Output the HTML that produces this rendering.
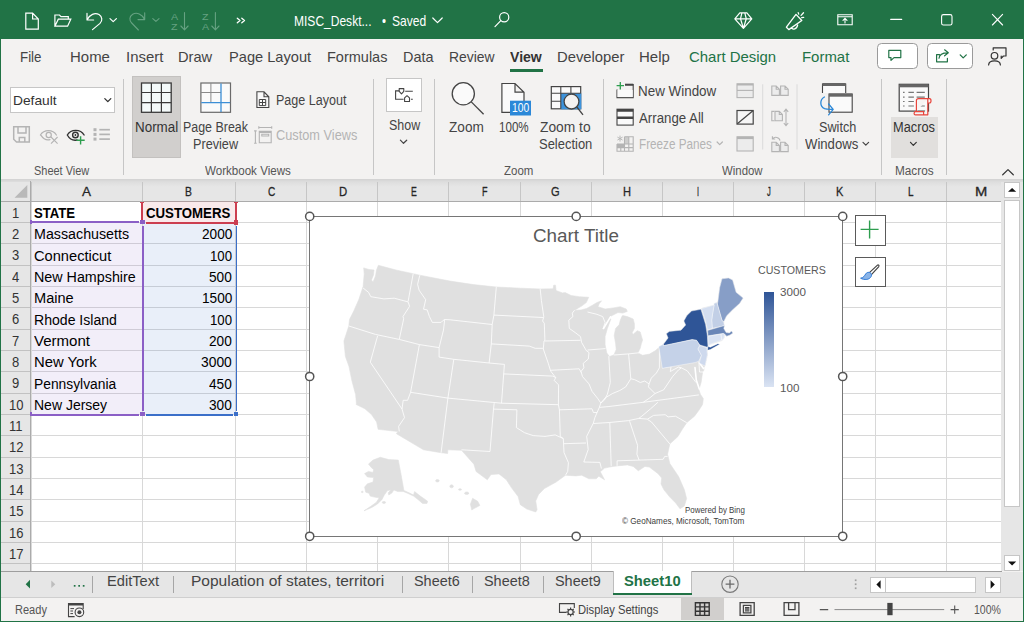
<!DOCTYPE html>
<html><head><meta charset="utf-8"><title>Excel</title><style>
html,body{margin:0;padding:0;}
body{width:1024px;height:622px;position:relative;overflow:hidden;background:#f3f2f1;font-family:"Liberation Sans",sans-serif;}
.t{position:absolute;white-space:nowrap;transform-origin:0 0;display:block;}
.b{position:absolute;box-sizing:border-box;}
svg{position:absolute;overflow:visible;}
</style></head><body>
<div class="b" style="left:0px;top:0px;width:1024px;height:39px;background:#217346;"></div>
<div class="b" style="left:0px;top:39px;width:1px;height:583px;background:#217346;"></div>
<div class="b" style="left:1023px;top:39px;width:1px;height:583px;background:#217346;"></div>
<div class="b" style="left:0px;top:620px;width:1024px;height:2px;background:#217346;"></div>
<span class="t" style="left:293.50px;top:13.30px;font-size:15px;line-height:15px;color:#fff;transform:scaleX(0.8016);">MISC_Deskt...</span>
<span class="t" style="left:382.00px;top:13.30px;font-size:15px;line-height:15px;color:#fff;transform:scaleX(0.7619);">•</span>
<span class="t" style="left:392.00px;top:13.30px;font-size:15px;line-height:15px;color:#fff;transform:scaleX(0.8035);">Saved</span>
<span class="t" style="left:20.00px;top:49.30px;font-size:15px;line-height:15px;color:#444;transform:scaleX(0.8889);">File</span>
<span class="t" style="left:69.70px;top:49.30px;font-size:15px;line-height:15px;color:#444;transform:scaleX(0.9975);">Home</span>
<span class="t" style="left:125.50px;top:49.30px;font-size:15px;line-height:15px;color:#444;transform:scaleX(0.9947);">Insert</span>
<span class="t" style="left:178.40px;top:49.30px;font-size:15px;line-height:15px;color:#444;transform:scaleX(0.9754);">Draw</span>
<span class="t" style="left:228.50px;top:49.30px;font-size:15px;line-height:15px;color:#444;transform:scaleX(0.9745);">Page Layout</span>
<span class="t" style="left:326.60px;top:49.30px;font-size:15px;line-height:15px;color:#444;transform:scaleX(0.9664);">Formulas</span>
<span class="t" style="left:403.00px;top:49.30px;font-size:15px;line-height:15px;color:#444;transform:scaleX(0.9606);">Data</span>
<span class="t" style="left:448.80px;top:49.30px;font-size:15px;line-height:15px;color:#444;transform:scaleX(0.9259);">Review</span>
<span class="t" style="left:556.50px;top:49.30px;font-size:15px;line-height:15px;color:#444;transform:scaleX(0.9872);">Developer</span>
<span class="t" style="left:638.50px;top:49.30px;font-size:15px;line-height:15px;color:#444;transform:scaleX(0.9976);">Help</span>
<span class="t" style="left:510.00px;top:49.30px;font-size:15px;line-height:15px;color:#333;font-weight:bold;transform:scaleX(0.9382);">View</span>
<div class="b" style="left:510px;top:69px;width:33px;height:3px;background:#217346;"></div>
<span class="t" style="left:689.40px;top:49.30px;font-size:15px;line-height:15px;color:#217346;transform:scaleX(0.9959);">Chart Design</span>
<span class="t" style="left:801.50px;top:49.30px;font-size:15px;line-height:15px;color:#217346;transform:scaleX(0.9958);">Format</span>
<div class="b" style="left:876.5px;top:43px;width:41px;height:26px;background:#fff;border:1px solid #9a9a9a;border-radius:4.5px;"></div>
<div class="b" style="left:927px;top:43px;width:45.5px;height:26px;background:#fff;border:1px solid #9a9a9a;border-radius:4.5px;"></div>
<svg width="1024" height="622" viewBox="0 0 1024 622" style="left:0;top:0;" fill="none" stroke-linecap="round" stroke-linejoin="round"><path d="M25.8 13.1 H32.6 L38.3 19 V29.1 H25.8 Z M32.6 13.1 V19 H38.3" stroke="#fff" stroke-width="1.2" stroke-linejoin="miter"/><path d="M54.9 26.2 V15 H59.5 L61 16.6 H68.3 V19.2 M54.9 26.2 L58.3 19.2 H70.8 L67.6 26.2 Z" stroke="#fff" stroke-width="1.2" stroke-linejoin="miter"/><path d="M87 13.4 V20 H93.6 M87.3 19.6 C89.5 14.5 95 12.3 99 14.6 C102.5 16.8 102.6 20.8 100 23.4 L92.5 29.6" stroke="#fff" stroke-width="1.2"/><path d="M110 18.6 L113.2 21.6 L116.4 18.6" stroke="#fff" stroke-width="1.2"/><path d="M144.7 12.8 V19.6 H138 M144.4 19.2 C142.2 14.1 136.7 11.9 132.7 14.2 C129.2 16.4 129.1 20.4 131.7 23 L138.4 30" stroke="#66a282" stroke-width="1.1"/><path d="M152.8 18.7 L155.9 21.4 L159 18.7" stroke="#66a282" stroke-width="1.1"/><path d="M184.5 12.6 V29.6 M180.9 26 L184.5 29.8 L188.1 26" stroke="#66a282" stroke-width="1.1"/><path d="M215.4 12.6 V29.6 M211.8 26 L215.4 29.8 L219.0 26" stroke="#66a282" stroke-width="1.1"/><path d="M237.3 18.2 L240 20.5 L237.3 22.8 M241.8 18.2 L244.5 20.5 L241.8 22.8" stroke="#fff" stroke-width="1.3"/><path d="M432.8 18 L437.5 22.6 L442.2 18" stroke="#fff" stroke-width="1.2"/><circle cx="504.2" cy="17.2" r="4.6" stroke="#fff" stroke-width="1.2"/><path d="M500.8 20.6 L495 26.6" stroke="#fff" stroke-width="1.2"/><path d="M739.8 12.8 H746.9 L751.8 18.8 L743.4 28.3 L734.8 18.8 Z M734.8 18.8 H751.8 M741.9 12.8 L740.5 18.8 L743.4 28.3 L746.3 18.8 L744.8 12.8" stroke="#fff" stroke-width="1.2"/><path d="M796 14.4 L801.8 20.5 L788.8 29.6 L786.4 27.2 Z M791.7 27.6 C792.4 30 796.9 29.6 797.6 25.2 M798.2 12.6 L798.7 14.1 M801.1 15.4 L803.5 12.7 M801.7 17.7 L803.7 17.3" stroke="#fff" stroke-width="1.3"/><path d="M837.8 14.8 H852.2 V24.8 H837.8 Z M837.8 16.8 H852.2 M845 23 V18.6 M843 20.4 L845 18.4 L847 20.4" stroke="#fff" stroke-width="1.1" stroke-linejoin="miter"/><path d="M890.7 19.4 H901.7" stroke="#fff" stroke-width="1.1"/><rect x="941.6" y="14.6" width="10.4" height="10.4" rx="1.8" stroke="#fff" stroke-width="1.1"/><path d="M992.4 14.4 L1002.6 25 M1002.6 14.4 L992.4 25" stroke="#fff" stroke-width="1.1"/></svg>
<span class="t" style="left:170.90px;top:11.59px;font-size:9.7px;line-height:9.7px;color:#66a282;transform:scaleX(1.1077);">A</span>
<span class="t" style="left:171.30px;top:21.69px;font-size:9.7px;line-height:9.7px;color:#66a282;transform:scaleX(1.0947);">Z</span>
<span class="t" style="left:202.30px;top:11.59px;font-size:9.7px;line-height:9.7px;color:#66a282;transform:scaleX(1.0947);">Z</span>
<span class="t" style="left:201.90px;top:21.69px;font-size:9.7px;line-height:9.7px;color:#66a282;transform:scaleX(1.1077);">A</span>
<div class="b" style="left:122.5px;top:79px;width:1px;height:96px;background:#c6c6c6;"></div>
<div class="b" style="left:372.5px;top:79px;width:1px;height:96px;background:#c6c6c6;"></div>
<div class="b" style="left:434.0px;top:79px;width:1px;height:96px;background:#c6c6c6;"></div>
<div class="b" style="left:603.0px;top:79px;width:1px;height:96px;background:#c6c6c6;"></div>
<div class="b" style="left:880.5px;top:79px;width:1px;height:96px;background:#c6c6c6;"></div>
<div class="b" style="left:945.5px;top:79px;width:1px;height:96px;background:#c6c6c6;"></div>
<div class="b" style="left:10px;top:87px;width:105px;height:25.5px;background:#fff;border:1px solid #c6c6c6;"></div>
<span class="t" style="left:12.70px;top:93.57px;font-size:13.5px;line-height:13.5px;color:#333;transform:scaleX(1.0199);">Default</span>
<div class="b" style="left:132.2px;top:76px;width:48.6px;height:81.6px;background:#d1cfcd;border:1px solid #c3c1bf;"></div>
<span class="t" style="left:134.50px;top:120.05px;font-size:14px;line-height:14px;color:#333;transform:scaleX(0.9573);">Normal</span>
<span class="t" style="left:183.20px;top:120.05px;font-size:14px;line-height:14px;color:#444;transform:scaleX(0.8874);">Page Break</span>
<span class="t" style="left:192.90px;top:137.25px;font-size:14px;line-height:14px;color:#444;transform:scaleX(0.9043);">Preview</span>
<span class="t" style="left:275.50px;top:93.15px;font-size:14px;line-height:14px;color:#444;transform:scaleX(0.8967);">Page Layout</span>
<span class="t" style="left:275.50px;top:127.85px;font-size:14px;line-height:14px;color:#b4b4b4;transform:scaleX(0.9116);">Custom Views</span>
<div class="b" style="left:386px;top:78px;width:36px;height:34px;background:#fff;border:1px solid #c6c6c6;"></div>
<span class="t" style="left:388.50px;top:118.45px;font-size:14px;line-height:14px;color:#444;transform:scaleX(0.8883);">Show</span>
<span class="t" style="left:449.40px;top:120.05px;font-size:14px;line-height:14px;color:#444;transform:scaleX(0.9717);">Zoom</span>
<span class="t" style="left:499.00px;top:120.05px;font-size:14px;line-height:14px;color:#444;transform:scaleX(0.8293);">100%</span>
<span class="t" style="left:540.40px;top:120.05px;font-size:14px;line-height:14px;color:#444;transform:scaleX(0.9849);">Zoom to</span>
<span class="t" style="left:538.90px;top:137.25px;font-size:14px;line-height:14px;color:#444;transform:scaleX(0.9260);">Selection</span>
<span class="t" style="left:638.20px;top:83.95px;font-size:14px;line-height:14px;color:#444;transform:scaleX(0.9578);">New Window</span>
<span class="t" style="left:638.60px;top:110.65px;font-size:14px;line-height:14px;color:#444;transform:scaleX(0.9460);">Arrange All</span>
<span class="t" style="left:638.60px;top:137.25px;font-size:14px;line-height:14px;color:#b4b4b4;transform:scaleX(0.8361);">Freeze Panes</span>
<span class="t" style="left:818.50px;top:120.05px;font-size:14px;line-height:14px;color:#444;transform:scaleX(0.9042);">Switch</span>
<span class="t" style="left:804.50px;top:137.25px;font-size:14px;line-height:14px;color:#444;transform:scaleX(0.9382);">Windows</span>
<div class="b" style="left:891px;top:117.3px;width:46.9px;height:40.6px;background:#e1dfdd;"></div>
<span class="t" style="left:893.00px;top:120.05px;font-size:14px;line-height:14px;color:#333;transform:scaleX(0.9155);">Macros</span>
<span class="t" style="left:34.30px;top:165.42px;font-size:12.5px;line-height:12.5px;color:#555;transform:scaleX(0.8769);">Sheet View</span>
<span class="t" style="left:205.00px;top:165.42px;font-size:12.5px;line-height:12.5px;color:#555;transform:scaleX(0.9263);">Workbook Views</span>
<span class="t" style="left:504.00px;top:165.42px;font-size:12.5px;line-height:12.5px;color:#555;transform:scaleX(0.9174);">Zoom</span>
<span class="t" style="left:722.00px;top:165.42px;font-size:12.5px;line-height:12.5px;color:#555;transform:scaleX(0.9124);">Window</span>
<span class="t" style="left:894.60px;top:165.42px;font-size:12.5px;line-height:12.5px;color:#555;transform:scaleX(0.9415);">Macros</span>
<svg width="1024" height="622" viewBox="0 0 1024 622" style="left:0;top:0;" fill="none" stroke-linecap="butt" stroke-linejoin="miter"><path d="M888.8 50.3 H900.8 V57.6 H894 L891 60.4 V57.6 H888.8 Z" stroke="#217346" stroke-width="1.2" stroke-linejoin="round"/><path d="M939.5 54.6 H936.6 V61.8 H947.4 V58.4 M939 58.2 C939.4 54.6 942.5 52.8 947.6 52.8 M944.6 49.8 L948.3 52.8 L944.6 55.8" stroke="#217346" stroke-width="1.2" stroke-linejoin="round" stroke-linecap="round"/><path d="M960.2 54.9 L963.2 57.9 L966.3 54.9" stroke="#217346" stroke-width="1.3" stroke-linecap="round" stroke-linejoin="round"/><circle cx="994.5" cy="55.8" r="3.3" stroke="#333" stroke-width="1.2"/><path d="M988.6 65 C988.9 59.6 1000.1 59.6 1000.4 65 M993.2 50 V47.8 H1006 V56 H1003.4 L1001.2 58.4 V56" stroke="#333" stroke-width="1.2" stroke-linejoin="round" stroke-linecap="round"/><path d="M104.8 98.6 L107.8 101.6 L110.8 98.6" stroke="#333" stroke-width="1.3" stroke-linecap="round" stroke-linejoin="round"/><path d="M13.7 126.7 H29.3 V142.1 H16.5 L13.7 139.3 Z M18 126.7 V133 H26 V126.7 M19.3 142.1 V137.4 H24.8 V142.1" stroke="#b4b4b4" stroke-width="1.5"/><path d="M40.4 135 C44 129.2 52.8 129.2 56.4 135 M41 135.4 C43.5 139.2 47.5 140.2 50 139.6" stroke="#b4b4b4" stroke-width="1.2" stroke-linecap="round"/><circle cx="48.7" cy="135" r="2.6" stroke="#b4b4b4" stroke-width="1.2"/><path d="M51 137 L57.6 143.6 M57.6 137 L51 143.6" stroke="#b4b4b4" stroke-width="1.1"/><path d="M67.3 135 C71 128.8 80.4 128.8 84.1 135 M67.3 135 C69.8 139.4 74 140.6 77 140" stroke="#333" stroke-width="1.4" stroke-linecap="round"/><circle cx="75.4" cy="135" r="2.8" stroke="#333" stroke-width="1.4"/><circle cx="75.4" cy="135" r="0.9" fill="#333"/><path d="M80.6 136.2 V144.4 M76.5 140.3 H84.7" stroke="#2e9e4f" stroke-width="1.4"/><rect x="93.5" y="128.2" width="3" height="3" fill="#b4b4b4"/><path d="M99.3 129.7 H109.9" stroke="#b4b4b4" stroke-width="1.7"/><rect x="93.5" y="132.9" width="3" height="3" fill="#b4b4b4"/><path d="M99.3 134.4 H109.9" stroke="#b4b4b4" stroke-width="1.7"/><rect x="93.5" y="137.6" width="3" height="3" fill="#b4b4b4"/><path d="M99.3 139.1 H109.9" stroke="#b4b4b4" stroke-width="1.7"/><rect x="141.5" y="83" width="29.7" height="29.3" fill="#f4fafa" stroke="#3a3a3a" stroke-width="1.3"/><path d="M151.4 83 V112.3 M161.4 83 V112.3 M141.5 92.5 H171.2 M141.5 102.6 H171.2" stroke="#3a3a3a" stroke-width="1.2"/><rect x="200.9" y="83" width="29.6" height="29.3" fill="#fafafa" stroke="#6a6a6a" stroke-width="1.2"/><path d="M210.9 83 V102.6 M200.9 92.5 H221" stroke="#8a8a8a" stroke-width="1"/><path d="M221 83.4 V111.9 M201.3 102.7 H230.1" stroke="#3c8fd6" stroke-width="1.3"/><path d="M256.9 91.8 H264 L268.8 96.8 V107.5 H256.9 Z M264 91.8 V96.8 H268.8" stroke="#444" stroke-width="1.1" fill="#fafafa"/><path d="M259.3 99.5 H265.7 V105.6 H259.3 Z M262.5 99.5 V105.6 M259.3 102.5 H265.7" stroke="#444" stroke-width="1"/><path d="M259.3 131.4 H271.2 V142.7 H259.3 Z M259.3 132.4 H271.2 M261.8 134.3 H268.7 V136 H261.8 Z M258.8 127.5 H271.7 M258.8 126.2 V128.8 M271.7 126.2 V128.8 M255.4 130.9 V143.2 M254.1 130.9 H256.7 M254.1 143.2 H256.7" stroke="#b4b4b4" stroke-width="1.1"/><path d="M399 90.9 H395.6 V99.2 H403.6 M405.2 91.2 H412.8 M410.9 99.2 H412.8" stroke="#444" stroke-width="1.1"/><path d="M399.2 88.6 H403.8 V91.4 L401.5 93.9 L399.2 91.4 Z M404.6 101.5 V97.9 L407 95.7 L409.5 97.9 V101.5 Z" stroke="#444" stroke-width="1.1" stroke-linejoin="round"/><path d="M400.4 140.2 L403.5 143.3 L406.7 140.2" stroke="#444" stroke-width="1.2" stroke-linecap="round" stroke-linejoin="round"/><circle cx="463.3" cy="93.8" r="11.1" fill="#fafafa" stroke="#444" stroke-width="1.3"/><path d="M471.3 101.9 L483.6 114.2" stroke="#444" stroke-width="1.3"/><path d="M501.9 83.5 H515 L524 92.2 V112.3 H501.9 Z M515 83.5 V92.2 H524" fill="#fafafa" stroke="#444" stroke-width="1.2"/><rect x="510" y="100.7" width="21" height="14.8" fill="#2b88d8"/><rect x="551.3" y="86.6" width="29.4" height="22.2" fill="#fafafa" stroke="#444" stroke-width="1.2"/><rect x="560.8" y="93.2" width="20.5" height="16.1" fill="#3c93dc"/><path d="M560.8 86.6 V108.8 M570.9 86.6 V93.2 M551.3 93.2 H580.7 M551.3 101.3 H560.8" stroke="#444" stroke-width="1.1"/><circle cx="571.5" cy="101.6" r="7.4" fill="#f3f2f1" stroke="#444" stroke-width="1.3"/><path d="M576.9 107 L583 114.8" stroke="#444" stroke-width="1.3"/><path d="M617 89.5 V97.6 H633.2 V84.6 H625" stroke="#444" stroke-width="1.1" fill="none"/><path d="M617.5 90 H632.7 V97.1 H617.5 Z" fill="#fafafa"/><path d="M625 84.7 H633.2" stroke="#444" stroke-width="2"/><path d="M620.3 82 V89.4 M616.6 85.7 H624" stroke="#2e9e4f" stroke-width="1.3"/><rect x="617" y="109.2" width="16.2" height="15.9" fill="#fafafa" stroke="#444" stroke-width="1.1"/><path d="M617 110.4 H633.2 M617 117.8 H633.2" stroke="#444" stroke-width="2.6"/><path d="M624.5 136.8 H633.2 V151.2 H617 V144 M624.5 136.8 V151.2 M617 144 H633.2 M628.8 136.8 V151.2 M617 147.6 H633.2 M620.8 144 V151.2" stroke="#b4b4b4" stroke-width="1.1"/><rect x="617" y="144" width="7.5" height="3.6" fill="#b4b4b4"/><rect x="624.5" y="136.8" width="4.3" height="7.2" fill="#b4b4b4" opacity="0.6"/><path d="M620 135.6 V141.6 M617.4 137.1 L622.6 140.1 M622.6 137.1 L617.4 140.1" stroke="#b4b4b4" stroke-width="0.9"/><path d="M717.1 142 L719.7 144.6 L722.4 142" stroke="#b4b4b4" stroke-width="1.2" stroke-linecap="round" stroke-linejoin="round"/><rect x="737" y="83.8" width="16.2" height="13.8" fill="#ececec" stroke="#b4b4b4" stroke-width="1.1"/><path d="M737 84.6 H753.2" stroke="#b4b4b4" stroke-width="1.8"/><path d="M737 90.4 H753.2" stroke="#b4b4b4" stroke-width="1.1"/><rect x="737" y="110.5" width="16.2" height="13.6" fill="#f6f6f6" stroke="#444" stroke-width="1.2"/><path d="M737.3 123.8 L752.9 110.8" stroke="#444" stroke-width="1.2"/><rect x="737" y="136.8" width="16.2" height="14.2" fill="#ececec" stroke="#b4b4b4" stroke-width="1.1"/><path d="M737 137.9 H753.2" stroke="#b4b4b4" stroke-width="2.4"/><path d="M762.7 84.3 V149.5 M797 84.3 V149.5" stroke="#dadada" stroke-width="1"/><path d="M771.8 86 H776.208 L779.4 89.192 V95.4 H771.8 Z M776.208 86 V89.192 H779.4" stroke="#b4b4b4" stroke-width="1.1" fill="#ececec"/><path d="M780.6 86 H785.008 L788.2 89.192 V95.4 H780.6 Z M785.008 86 V89.192 H788.2" stroke="#b4b4b4" stroke-width="1.1" fill="#ececec"/><path d="M774.5 111.4 H771.8 V120.8 H774.5" stroke="#b4b4b4" stroke-width="1.1"/><path d="M775 111.4 H779.292 L782.4 114.50800000000001 V120.80000000000001 H775 Z M779.292 111.4 V114.50800000000001 H782.4" stroke="#b4b4b4" stroke-width="1.1" fill="#ececec"/><path d="M786 109.4 V125.4 M783.8 111.8 L786 109.2 L788.2 111.8 M783.8 123 L786 125.6 L788.2 123" stroke="#b4b4b4" stroke-width="1.1"/><path d="M771.8 142.2 H776.208 L779.4 145.392 V151.6 H771.8 Z M776.208 142.2 V145.392 H779.4" stroke="#b4b4b4" stroke-width="1.1" fill="#ececec"/><path d="M780.6 142.2 H785.008 L788.2 145.392 V151.6 H780.6 Z M785.008 142.2 V145.392 H788.2" stroke="#b4b4b4" stroke-width="1.1" fill="#ececec"/><path d="M780 140.6 C779.5 137 774.5 136.4 772.8 138.6 M772.4 136.2 V139 H775.2" stroke="#b4b4b4" stroke-width="1.1"/><path d="M822.5 93 V84 H845.7 V93" stroke="#444" stroke-width="1.1" fill="#fafafa"/><path d="M822.5 84.5 H845.7" stroke="#666" stroke-width="3"/><rect x="829" y="94" width="23.2" height="18.2" fill="#fafafa" stroke="#444" stroke-width="1.1"/><path d="M829 95.2 H852.2" stroke="#666" stroke-width="3"/><path d="M824.4 97 C819.6 99.6 819.6 106.4 824.6 108.6 C826.8 109.5 829.8 109.4 832.6 109.3 M828.6 104 L833.2 109.4 L828.6 114.8" stroke="#2b88d8" stroke-width="1.3" stroke-linecap="round" stroke-linejoin="round"/><path d="M863 142.3 L865.8 145.1 L868.6 142.3" stroke="#444" stroke-width="1.2" stroke-linecap="round" stroke-linejoin="round"/><rect x="899.2" y="84.3" width="29.3" height="26.8" fill="#fafafa" stroke="#444" stroke-width="1.2"/><path d="M899.2 85.8 H928.5" stroke="#666" stroke-width="3"/><path d="M903 92.4 H904.6 M908.4 92.4 H913.9 M916.6 92.4 H924.8" stroke="#777" stroke-width="1.1"/><path d="M903 97.1 H904.6 M908.4 97.1 H913.9 M916.6 97.1 H924.8" stroke="#777" stroke-width="1.1"/><path d="M903 101.5 H904.6 M908.4 101.5 H913.9 M916.6 101.5 H924.8" stroke="#777" stroke-width="1.1"/><path d="M903 106 H904.6 M908.4 106 H913.9 M916.6 106 H924.8" stroke="#777" stroke-width="1.1"/><path d="M916.4 111.6 V100.6 C916.4 99.2 917.2 98.6 918.6 98.6 H929.6 C931.4 98.6 931.6 103 929.4 103 H927.8 V98.8 M927.8 103 V114.8 H915.4 C913.6 114.8 913.8 111.6 915.4 111.6 H923.6 V114.6" fill="#f7f4f3" stroke="#e8453c" stroke-width="1.2" stroke-linejoin="round"/><path d="M910.5 142.3 L913.3 145.3 L916.3 142.3" stroke="#333" stroke-width="1.2" stroke-linecap="round" stroke-linejoin="round"/><path d="M1002.7 174.8 L1008 169.6 L1013.3 174.8" stroke="#333" stroke-width="1.2" stroke-linecap="round" stroke-linejoin="round"/></svg>
<span class="t" style="left:512.00px;top:102.10px;font-size:12.4px;line-height:12.4px;color:#fff;transform:scaleX(0.8339);">100</span>
<div class="b" style="left:1px;top:182px;width:1000px;height:389px;background:#fff;"></div>
<div class="b" style="left:1px;top:179px;width:1022px;height:22.5px;background:linear-gradient(#d2d2d2 0px,#dedede 3px,#e6e6e6 8px);"></div>
<div class="b" style="left:1px;top:182px;width:29.3px;height:389px;background:#e6e6e6;"></div>
<div class="b" style="left:1001px;top:182px;width:22px;height:389px;background:#e6e6e6;"></div>
<div class="b" style="left:31px;top:201px;width:1px;height:370px;background:#d8d8d8;"></div>
<div class="b" style="left:31px;top:182px;width:1px;height:19px;background:#c6c6c6;"></div>
<div class="b" style="left:142px;top:201px;width:1px;height:370px;background:#d8d8d8;"></div>
<div class="b" style="left:142px;top:182px;width:1px;height:19px;background:#c6c6c6;"></div>
<div class="b" style="left:235px;top:201px;width:1px;height:370px;background:#d8d8d8;"></div>
<div class="b" style="left:235px;top:182px;width:1px;height:19px;background:#c6c6c6;"></div>
<div class="b" style="left:306px;top:201px;width:1px;height:370px;background:#d8d8d8;"></div>
<div class="b" style="left:306px;top:182px;width:1px;height:19px;background:#c6c6c6;"></div>
<div class="b" style="left:377px;top:201px;width:1px;height:370px;background:#d8d8d8;"></div>
<div class="b" style="left:377px;top:182px;width:1px;height:19px;background:#c6c6c6;"></div>
<div class="b" style="left:448px;top:201px;width:1px;height:370px;background:#d8d8d8;"></div>
<div class="b" style="left:448px;top:182px;width:1px;height:19px;background:#c6c6c6;"></div>
<div class="b" style="left:520px;top:201px;width:1px;height:370px;background:#d8d8d8;"></div>
<div class="b" style="left:520px;top:182px;width:1px;height:19px;background:#c6c6c6;"></div>
<div class="b" style="left:591px;top:201px;width:1px;height:370px;background:#d8d8d8;"></div>
<div class="b" style="left:591px;top:182px;width:1px;height:19px;background:#c6c6c6;"></div>
<div class="b" style="left:662px;top:201px;width:1px;height:370px;background:#d8d8d8;"></div>
<div class="b" style="left:662px;top:182px;width:1px;height:19px;background:#c6c6c6;"></div>
<div class="b" style="left:733px;top:201px;width:1px;height:370px;background:#d8d8d8;"></div>
<div class="b" style="left:733px;top:182px;width:1px;height:19px;background:#c6c6c6;"></div>
<div class="b" style="left:804px;top:201px;width:1px;height:370px;background:#d8d8d8;"></div>
<div class="b" style="left:804px;top:182px;width:1px;height:19px;background:#c6c6c6;"></div>
<div class="b" style="left:875px;top:201px;width:1px;height:370px;background:#d8d8d8;"></div>
<div class="b" style="left:875px;top:182px;width:1px;height:19px;background:#c6c6c6;"></div>
<div class="b" style="left:946px;top:201px;width:1px;height:370px;background:#d8d8d8;"></div>
<div class="b" style="left:946px;top:182px;width:1px;height:19px;background:#c6c6c6;"></div>
<div class="b" style="left:31px;top:201px;width:970px;height:1px;background:#d8d8d8;"></div>
<div class="b" style="left:1px;top:201px;width:30px;height:1px;background:#c2c2c2;"></div>
<div class="b" style="left:31px;top:222px;width:970px;height:1px;background:#d8d8d8;"></div>
<div class="b" style="left:1px;top:222px;width:30px;height:1px;background:#c2c2c2;"></div>
<div class="b" style="left:31px;top:243px;width:970px;height:1px;background:#d8d8d8;"></div>
<div class="b" style="left:1px;top:243px;width:30px;height:1px;background:#c2c2c2;"></div>
<div class="b" style="left:31px;top:265px;width:970px;height:1px;background:#d8d8d8;"></div>
<div class="b" style="left:1px;top:265px;width:30px;height:1px;background:#c2c2c2;"></div>
<div class="b" style="left:31px;top:286px;width:970px;height:1px;background:#d8d8d8;"></div>
<div class="b" style="left:1px;top:286px;width:30px;height:1px;background:#c2c2c2;"></div>
<div class="b" style="left:31px;top:307px;width:970px;height:1px;background:#d8d8d8;"></div>
<div class="b" style="left:1px;top:307px;width:30px;height:1px;background:#c2c2c2;"></div>
<div class="b" style="left:31px;top:329px;width:970px;height:1px;background:#d8d8d8;"></div>
<div class="b" style="left:1px;top:329px;width:30px;height:1px;background:#c2c2c2;"></div>
<div class="b" style="left:31px;top:350px;width:970px;height:1px;background:#d8d8d8;"></div>
<div class="b" style="left:1px;top:350px;width:30px;height:1px;background:#c2c2c2;"></div>
<div class="b" style="left:31px;top:371px;width:970px;height:1px;background:#d8d8d8;"></div>
<div class="b" style="left:1px;top:371px;width:30px;height:1px;background:#c2c2c2;"></div>
<div class="b" style="left:31px;top:393px;width:970px;height:1px;background:#d8d8d8;"></div>
<div class="b" style="left:1px;top:393px;width:30px;height:1px;background:#c2c2c2;"></div>
<div class="b" style="left:31px;top:414px;width:970px;height:1px;background:#d8d8d8;"></div>
<div class="b" style="left:1px;top:414px;width:30px;height:1px;background:#c2c2c2;"></div>
<div class="b" style="left:31px;top:435px;width:970px;height:1px;background:#d8d8d8;"></div>
<div class="b" style="left:1px;top:435px;width:30px;height:1px;background:#c2c2c2;"></div>
<div class="b" style="left:31px;top:457px;width:970px;height:1px;background:#d8d8d8;"></div>
<div class="b" style="left:1px;top:457px;width:30px;height:1px;background:#c2c2c2;"></div>
<div class="b" style="left:31px;top:478px;width:970px;height:1px;background:#d8d8d8;"></div>
<div class="b" style="left:1px;top:478px;width:30px;height:1px;background:#c2c2c2;"></div>
<div class="b" style="left:31px;top:499px;width:970px;height:1px;background:#d8d8d8;"></div>
<div class="b" style="left:1px;top:499px;width:30px;height:1px;background:#c2c2c2;"></div>
<div class="b" style="left:31px;top:521px;width:970px;height:1px;background:#d8d8d8;"></div>
<div class="b" style="left:1px;top:521px;width:30px;height:1px;background:#c2c2c2;"></div>
<div class="b" style="left:31px;top:542px;width:970px;height:1px;background:#d8d8d8;"></div>
<div class="b" style="left:1px;top:542px;width:30px;height:1px;background:#c2c2c2;"></div>
<div class="b" style="left:31px;top:563px;width:970px;height:1px;background:#d8d8d8;"></div>
<div class="b" style="left:1px;top:563px;width:30px;height:1px;background:#c2c2c2;"></div>
<div class="b" style="left:1px;top:201px;width:1000px;height:1px;background:#ababab;"></div>
<div class="b" style="left:30px;top:180.5px;width:1px;height:390.5px;background:#ababab;"></div>
<span class="t" style="left:82.20px;top:185.09px;font-size:13.6px;line-height:13.6px;color:#262626;transform:scaleX(0.9931);-webkit-text-stroke:0.3px #262626;">A</span>
<span class="t" style="left:185.45px;top:185.09px;font-size:13.6px;line-height:13.6px;color:#262626;transform:scaleX(0.7614);-webkit-text-stroke:0.3px #262626;">B</span>
<span class="t" style="left:267.65px;top:185.09px;font-size:13.6px;line-height:13.6px;color:#262626;transform:scaleX(0.7439);-webkit-text-stroke:0.3px #262626;">C</span>
<span class="t" style="left:338.50px;top:185.09px;font-size:13.6px;line-height:13.6px;color:#262626;transform:scaleX(0.8357);-webkit-text-stroke:0.3px #262626;">D</span>
<span class="t" style="left:410.70px;top:185.09px;font-size:13.6px;line-height:13.6px;color:#262626;transform:scaleX(0.6400);-webkit-text-stroke:0.3px #262626;">E</span>
<span class="t" style="left:481.85px;top:185.09px;font-size:13.6px;line-height:13.6px;color:#262626;transform:scaleX(0.6617);-webkit-text-stroke:0.3px #262626;">F</span>
<span class="t" style="left:551.30px;top:185.09px;font-size:13.6px;line-height:13.6px;color:#262626;transform:scaleX(0.8142);-webkit-text-stroke:0.3px #262626;">G</span>
<span class="t" style="left:622.60px;top:185.09px;font-size:13.6px;line-height:13.6px;color:#262626;transform:scaleX(0.8153);-webkit-text-stroke:0.3px #262626;">H</span>
<span class="t" style="left:696.60px;top:185.09px;font-size:13.6px;line-height:13.6px;color:#262626;transform:scaleX(0.5333);-webkit-text-stroke:0.3px #262626;">I</span>
<span class="t" style="left:766.70px;top:185.09px;font-size:13.6px;line-height:13.6px;color:#262626;transform:scaleX(0.5578);-webkit-text-stroke:0.3px #262626;">J</span>
<span class="t" style="left:836.05px;top:185.09px;font-size:13.6px;line-height:13.6px;color:#262626;transform:scaleX(0.8055);-webkit-text-stroke:0.3px #262626;">K</span>
<span class="t" style="left:908.25px;top:185.09px;font-size:13.6px;line-height:13.6px;color:#262626;transform:scaleX(0.7273);-webkit-text-stroke:0.3px #262626;">L</span>
<span class="t" style="left:975.45px;top:185.09px;font-size:13.6px;line-height:13.6px;color:#262626;transform:scaleX(1.0873);-webkit-text-stroke:0.3px #262626;">M</span>
<span class="t" style="left:12.37px;top:205.65px;font-size:14px;line-height:14px;color:#333;transform:scaleX(0.9300);">1</span>
<span class="t" style="left:12.37px;top:226.98px;font-size:14px;line-height:14px;color:#333;transform:scaleX(0.9300);">2</span>
<span class="t" style="left:12.37px;top:248.31px;font-size:14px;line-height:14px;color:#333;transform:scaleX(0.9300);">3</span>
<span class="t" style="left:12.37px;top:269.65px;font-size:14px;line-height:14px;color:#333;transform:scaleX(0.9300);">4</span>
<span class="t" style="left:12.37px;top:290.98px;font-size:14px;line-height:14px;color:#333;transform:scaleX(0.9300);">5</span>
<span class="t" style="left:12.37px;top:312.31px;font-size:14px;line-height:14px;color:#333;transform:scaleX(0.9300);">6</span>
<span class="t" style="left:12.37px;top:333.65px;font-size:14px;line-height:14px;color:#333;transform:scaleX(0.9300);">7</span>
<span class="t" style="left:12.37px;top:354.98px;font-size:14px;line-height:14px;color:#333;transform:scaleX(0.9300);">8</span>
<span class="t" style="left:12.37px;top:376.31px;font-size:14px;line-height:14px;color:#333;transform:scaleX(0.9300);">9</span>
<span class="t" style="left:8.76px;top:397.65px;font-size:14px;line-height:14px;color:#333;transform:scaleX(0.9300);">10</span>
<span class="t" style="left:9.23px;top:418.98px;font-size:14px;line-height:14px;color:#333;transform:scaleX(0.9300);">11</span>
<span class="t" style="left:8.76px;top:440.31px;font-size:14px;line-height:14px;color:#333;transform:scaleX(0.9300);">12</span>
<span class="t" style="left:8.76px;top:461.64px;font-size:14px;line-height:14px;color:#333;transform:scaleX(0.9300);">13</span>
<span class="t" style="left:8.76px;top:482.98px;font-size:14px;line-height:14px;color:#333;transform:scaleX(0.9300);">14</span>
<span class="t" style="left:8.76px;top:504.31px;font-size:14px;line-height:14px;color:#333;transform:scaleX(0.9300);">15</span>
<span class="t" style="left:8.76px;top:525.64px;font-size:14px;line-height:14px;color:#333;transform:scaleX(0.9300);">16</span>
<span class="t" style="left:8.76px;top:546.98px;font-size:14px;line-height:14px;color:#333;transform:scaleX(0.9300);">17</span>
<div class="b" style="left:31.5px;top:222.633px;width:110px;height:191.49699999999999px;background:rgba(126,87,194,0.10);"></div>
<div class="b" style="left:142.5px;top:222.633px;width:93px;height:191.49699999999999px;background:rgba(59,111,201,0.11);"></div>
<div class="b" style="left:142.5px;top:201.3px;width:93px;height:20.833px;background:rgba(201,55,74,0.11);"></div>
<div class="b" style="left:31px;top:221.2px;width:108.2px;height:1.8px;background:#8b5fc6;"></div>
<div class="b" style="left:141.9px;top:225.9px;width:1.8px;height:185px;background:#8b5fc6;"></div>
<div class="b" style="left:31px;top:413.8px;width:108.2px;height:1.8px;background:#8b5fc6;"></div>
<div class="b" style="left:30.3px;top:220.2px;width:2.2px;height:4.2px;background:#8b5fc6;"></div>
<div class="b" style="left:30.3px;top:412.2px;width:2.2px;height:4.2px;background:#8b5fc6;"></div>
<div class="b" style="left:140.4px;top:220.1px;width:4.2px;height:4.4px;background:#8b5fc6;"></div>
<div class="b" style="left:140.4px;top:412.1px;width:4.2px;height:4.4px;background:#8b5fc6;"></div>
<div class="b" style="left:235.5px;top:225.9px;width:1.8px;height:185px;background:#3b6fc9;"></div>
<div class="b" style="left:145.6px;top:413.8px;width:87.4px;height:1.8px;background:#3b6fc9;"></div>
<div class="b" style="left:234px;top:412.1px;width:4px;height:4.4px;background:#3b6fc9;"></div>
<div class="b" style="left:141.2px;top:202px;width:1.8px;height:18px;background:#cc3e50;"></div>
<div class="b" style="left:235.3px;top:202px;width:1.8px;height:18px;background:#cc3e50;"></div>
<div class="b" style="left:145.6px;top:222.1px;width:88.4px;height:1.8px;background:#cc3e50;"></div>
<div class="b" style="left:140.3px;top:201.8px;width:4.1px;height:1.5px;background:#cc3e50;"></div>
<div class="b" style="left:233.6px;top:201.8px;width:4.6px;height:1.5px;background:#cc3e50;"></div>
<div class="b" style="left:234px;top:220.3px;width:4px;height:4.3px;background:#cc3e50;"></div>
<span class="t" style="left:33.70px;top:205.85px;font-size:14px;line-height:14px;color:#000;font-weight:bold;transform:scaleX(0.9381);">STATE</span>
<span class="t" style="left:146.20px;top:205.85px;font-size:14px;line-height:14px;color:#000;font-weight:bold;transform:scaleX(0.9452);">CUSTOMERS</span>
<span class="t" style="left:34.00px;top:227.18px;font-size:14px;line-height:14px;color:#000;transform:scaleX(1.0185);">Massachusetts</span>
<span class="t" style="left:201.70px;top:227.18px;font-size:14px;line-height:14px;color:#000;transform:scaleX(0.9735);">2000</span>
<span class="t" style="left:34.00px;top:248.51px;font-size:14px;line-height:14px;color:#000;transform:scaleX(1.0455);">Connecticut</span>
<span class="t" style="left:210.00px;top:248.51px;font-size:14px;line-height:14px;color:#000;transform:scaleX(0.9412);">100</span>
<span class="t" style="left:34.00px;top:269.85px;font-size:14px;line-height:14px;color:#000;transform:scaleX(1.0215);">New Hampshire</span>
<span class="t" style="left:209.20px;top:269.85px;font-size:14px;line-height:14px;color:#000;transform:scaleX(0.9754);">500</span>
<span class="t" style="left:34.00px;top:291.18px;font-size:14px;line-height:14px;color:#000;transform:scaleX(1.0413);">Maine</span>
<span class="t" style="left:201.70px;top:291.18px;font-size:14px;line-height:14px;color:#000;transform:scaleX(0.9735);">1500</span>
<span class="t" style="left:34.00px;top:312.51px;font-size:14px;line-height:14px;color:#000;transform:scaleX(1.0048);">Rhode Island</span>
<span class="t" style="left:210.00px;top:312.51px;font-size:14px;line-height:14px;color:#000;transform:scaleX(0.9412);">100</span>
<span class="t" style="left:34.00px;top:333.85px;font-size:14px;line-height:14px;color:#000;transform:scaleX(1.0743);">Vermont</span>
<span class="t" style="left:209.20px;top:333.85px;font-size:14px;line-height:14px;color:#000;transform:scaleX(0.9754);">200</span>
<span class="t" style="left:34.00px;top:355.18px;font-size:14px;line-height:14px;color:#000;transform:scaleX(1.0593);">New York</span>
<span class="t" style="left:201.20px;top:355.18px;font-size:14px;line-height:14px;color:#000;transform:scaleX(0.9896);">3000</span>
<span class="t" style="left:34.00px;top:376.51px;font-size:14px;line-height:14px;color:#000;transform:scaleX(0.9866);">Pennsylvania</span>
<span class="t" style="left:209.20px;top:376.51px;font-size:14px;line-height:14px;color:#000;transform:scaleX(0.9754);">450</span>
<span class="t" style="left:34.00px;top:397.85px;font-size:14px;line-height:14px;color:#000;transform:scaleX(0.9997);">New Jersey</span>
<span class="t" style="left:209.20px;top:397.85px;font-size:14px;line-height:14px;color:#000;transform:scaleX(0.9754);">300</span>
<svg width="1024" height="622" viewBox="0 0 1024 622" style="left:0;top:0;"><path d="M14.5 197.8 H27.3 V184.9 Z" fill="#b9b9b9"/></svg>
<div class="b" style="left:308.9px;top:215.8px;width:534.4px;height:321.2px;background:#fff;border:1.4px solid #767676;"></div>
<svg width="1024" height="622" viewBox="0 0 1024 622" style="left:0;top:0;">
<g fill="#e0e0e0" stroke="#e0e0e0" stroke-width="0.6" stroke-linejoin="round">
<polygon points="363.7,267.9 369.0,269.5 374.0,270.0 373.5,275.0 371.5,280.0 373.0,282.0 375.5,276.0 376.5,270.0 378.4,265.3 396.0,270.0 413.2,273.7 419.8,275.2 450.0,281.1 473.4,284.6 496.3,287.0 520.3,288.2 540.2,289.0 553.1,288.8 553.7,285.2 555.5,285.2 556.1,290.5 562.5,292.9 565.2,292.6 571.1,295.5 579.3,296.7 588.7,297.3 586.3,302.6 581.6,306.1 574.6,310.2 581.0,310.0 586.5,308.5 592.0,305.5 597.0,302.5 601.6,300.8 599.2,303.8 598.0,306.7 605.1,309.0 613.3,307.9 620.3,306.7 626.2,309.0 627.3,311.4 622.7,313.1 618.0,312.5 612.1,315.5 609.0,318.0 610.9,319.0 607.4,328.4 605.1,336.6 605.1,344.8 606.8,353.0 609.5,356.5 613.9,355.0 616.2,349.5 615.6,343.6 614.2,335.4 615.6,328.4 619.1,324.8 620.3,320.2 622.1,316.1 622.7,315.5 627.3,316.6 633.2,319.0 634.4,323.7 634.4,328.4 632.0,333.0 633.2,334.2 637.3,330.7 640.2,331.9 642.6,340.1 641.4,343.6 640.2,348.3 637.9,353.0 642.6,355.3 649.6,354.1 655.5,350.6 659.0,347.5 663.4,344.3 668.1,337.9 666.4,333.8 669.3,331.4 681.0,330.2 685.7,325.0 683.9,320.9 686.9,315.5 691.6,311.0 700.9,309.3 702.7,308.1 714.4,305.2 714.4,303.4 716.8,302.8 717.3,304.0 717.9,301.6 719.7,287.6 722.0,278.8 728.5,278.0 732.6,280.0 736.1,292.3 743.1,298.1 739.6,303.4 732.6,309.8 726.7,315.7 723.8,321.6 723.8,324.5 724.4,325.7 723.8,328.6 726.1,332.5 729.5,333.0 731.5,331.0 732.8,333.0 730.0,335.0 726.7,336.2 724.4,334.5 724.1,337.9 722.0,340.5 710.3,344.3 708.2,345.8 707.4,347.2 706.8,347.8 707.4,354.8 705.0,366.0 704.0,367.1 703.9,370.1 702.6,372.2 701.1,382.5 698.9,389.8 700.4,394.2 703.3,398.6 702.6,404.4 698.9,410.3 694.5,416.2 686.7,422.7 682.3,429.3 677.9,436.6 669.8,443.9 667.6,454.2 669.8,463.4 678.6,476.6 684.4,489.8 686.6,498.6 684.4,505.9 680.0,508.8 675.7,503.0 669.8,497.1 663.9,489.8 661.0,483.9 661.7,478.1 658.1,473.7 649.3,467.1 644.9,466.4 638.3,470.8 633.2,466.4 627.3,464.9 617.1,465.9 612.0,466.6 604.6,468.1 600.3,471.8 604.6,479.8 598.8,476.2 596.2,478.8 588.9,478.8 581.6,475.2 575.7,475.9 565.5,475.2 556.2,482.0 544.4,488.6 538.6,494.4 535.7,501.0 537.1,509.8 535.7,512.0 526.9,509.1 520.3,504.7 518.1,496.6 511.5,487.8 506.4,479.8 499.0,473.9 491.0,474.6 487.3,479.8 476.1,471.5 473.9,464.2 461.5,450.3 447.7,449.8 447.7,453.5 441.1,452.7 423.5,449.8 396.4,433.7 397.9,431.5 378.1,429.3 376.6,422.0 371.5,414.6 364.9,408.8 356.1,404.4 356.4,403.2 355.6,394.5 352.0,381.3 349.0,366.6 345.4,356.4 343.9,341.0 348.8,326.0 349.5,319.4 353.9,310.7 359.0,299.0 363.1,286.5 364.2,274.0"/>
<polygon points="368.5,464.1 373.0,460.1 380.3,457.3 388.8,459.6 398.3,460.1 401.1,474.8 403.9,490.5 407.9,492.2 413.5,495.0 414.6,491.6 420.3,496.1 427.6,501.2 427.0,503.4 422.5,503.4 418.0,499.5 413.5,496.1 407.5,493.2 403.4,491.6 397.8,491.6 393.8,489.9 392.1,492.8 388.8,495.0 388.2,492.8 391.0,489.9 387.6,490.5 384.3,495.0 382.0,499.5 377.5,504.0 371.9,507.4 364.0,510.8 370.8,506.3 376.4,502.3 379.2,497.8 375.3,497.3 370.2,496.1 369.1,493.3 365.7,492.2 364.6,487.1 367.4,483.8 373.0,482.1 373.6,477.6 367.4,477.0 364.6,473.6 368.5,471.4 373.0,472.5 373.6,469.7 370.8,466.9"/>
<polygon points="472.6,498.3 477.7,501.3 479.9,505.4 474.0,508.6 471.8,510.0 470.4,504.2"/>
<ellipse cx="383.9" cy="502.4" rx="1.7" ry="1"/><ellipse cx="362.3" cy="491.9" rx="0.9" ry="0.7"/>
<ellipse cx="437.4" cy="480.8" rx="1.8" ry="1.2"/><ellipse cx="451.6" cy="486.3" rx="1.7" ry="1.5"/><ellipse cx="460" cy="489.5" rx="1.5" ry="0.8"/><ellipse cx="466.7" cy="493.2" rx="2" ry="1.3"/>
</g>
<g fill="none" stroke="#fff" stroke-width="0.95" stroke-linejoin="round" stroke-opacity="0.85">
<polyline points="413.2,273.7 408.1,301.5"/>
<polyline points="363.1,288.0 368.6,292.4 370.8,296.7 383.9,298.9 394.2,298.2 408.1,301.9"/>
<polyline points="408.1,301.9 409.6,306.3 403.0,316.5 403.7,318.7 399.3,339.2"/>
<polyline points="419.8,275.2 417.6,284.3 419.1,290.2 425.7,299.7 423.5,309.2 427.2,309.9 429.4,316.5 432.3,322.4 441.1,322.4 442.5,320.9 444.7,319.5"/>
<polyline points="444.7,319.5 450.0,319.8 492.2,324.5"/>
<polyline points="444.7,319.5 443.5,330.0 439.1,347.6"/>
<polyline points="348.8,326.0 375.4,334.4 399.6,339.5 419.4,344.6 439.1,347.6"/>
<polyline points="377.6,335.9 370.3,362.2 402.0,409.0"/>
<polyline points="402.0,409.0 404.5,417.6 398.6,426.4 399.3,431.5"/>
<polyline points="410.6,392.3 407.6,400.3 403.2,400.3 402.0,409.0"/>
<polyline points="419.4,344.6 410.6,392.3"/>
<polyline points="410.6,392.3 447.9,398.1 501.5,403.2 558.6,404.7"/>
<polyline points="439.1,347.6 439.1,357.1 453.8,359.3"/>
<polyline points="453.8,359.3 489.1,363.0 504.4,364.4"/>
<polyline points="453.8,359.3 447.9,398.1 441.1,452.7"/>
<polyline points="496.3,287.0 493.9,315.1 492.2,324.5 491.3,343.9 489.1,363.0"/>
<polyline points="493.9,315.1 543.2,317.5"/>
<polyline points="491.3,343.9 529.3,346.1 535.2,348.3 542.5,348.3 543.3,349.0"/>
<polyline points="504.4,364.4 503.7,373.9"/>
<polyline points="503.7,373.9 552.8,376.1 555.7,377.6"/>
<polyline points="503.7,373.9 501.5,403.2"/>
<polyline points="494.2,403.2 493.5,409.1 516.9,409.8 516.4,427.6"/>
<polyline points="493.5,409.1 490.0,451.5 461.5,449.8"/>
<polyline points="516.4,427.6 524.5,432.7 533.2,435.6 545.0,436.4 555.2,434.9 563.3,438.6"/>
<polyline points="559.4,409.8 560.3,436.4 563.3,438.6"/>
<polyline points="563.3,438.6 564.0,452.5 568.4,462.7 567.7,471.5 565.5,475.2"/>
<polyline points="564.0,443.7 586.0,443.0"/>
<polyline points="540.2,289.0 541.4,300.5 543.8,316.9 542.6,321.0 544.3,323.3 544.9,340.3 544.0,341.0 543.3,349.0 548.4,363.7 550.6,371.0 555.7,377.6 554.3,380.5 558.6,384.9 558.4,404.7 559.4,409.8"/>
<polyline points="544.5,341.0 580.6,340.3"/>
<polyline points="550.6,370.3 579.2,368.8 581.3,372.5"/>
<polyline points="574.6,310.2 572.3,313.1 572.9,316.6 568.8,320.2 569.3,328.4 575.8,333.0 580.5,336.6 581.6,342.4 586.3,350.6 589.0,352.5 588.3,359.0 583.2,363.4 583.9,367.8 581.0,371.5 582.5,376.6 589.0,383.9 592.0,391.3 597.8,398.6 600.8,403.0 599.3,407.4 594.9,417.6 593.3,423.2 586.7,436.4 588.2,449.5 583.8,462.0 599.9,462.4 601.4,468.6"/>
<polyline points="587.5,312.0 596.9,314.3 602.7,316.6 605.1,322.5 603.0,329.0"/>
<polyline points="587.5,350.0 605.5,348.6"/>
<polyline points="608.8,356.1 610.3,382.5 607.4,394.2 604.4,400.1 600.8,403.0"/>
<polyline points="613.9,355.0 628.6,353.9 638.8,352.8"/>
<polyline points="628.6,353.9 630.8,378.8"/>
<polyline points="600.8,403.0 605.2,397.9 612.5,393.5 619.8,390.5 625.7,386.9 630.8,378.8 634.5,379.6 640.3,382.5 644.7,381.0 649.1,383.9 651.3,378.1 656.4,373.0 659.4,367.8 659.4,347.0"/>
<polyline points="649.1,383.9 648.4,386.9 655.0,393.5 649.8,397.9 643.2,402.3"/>
<polyline points="599.3,407.4 608.1,406.6 643.2,402.3 698.9,394.9"/>
<polyline points="655.0,393.5 663.7,389.8 669.6,381.0 672.5,376.6 678.4,370.0 681.3,367.8"/>
<polyline points="662.3,367.8 671.1,366.4 670.3,371.5 678.4,367.1 681.3,367.8 687.2,370.8 691.6,376.6 696.0,382.5"/>
<polyline points="657.9,402.3 650.6,408.8 641.8,416.2 638.8,418.4"/>
<polyline points="593.4,423.5 609.5,422.5 628.6,420.6 638.8,418.4 647.6,419.1"/>
<polyline points="609.8,422.7 611.2,465.9"/>
<polyline points="629.6,421.2 637.6,445.4 636.9,454.2 639.1,460.1"/>
<polyline points="617.1,465.9 617.1,460.8 639.1,460.1 663.2,459.3 664.7,456.4 667.6,456.4"/>
<polyline points="647.6,419.5 651.5,422.0 669.8,443.9"/>
<polyline points="647.6,419.1 653.5,415.4 665.2,414.7 668.1,416.9 675.5,416.2 686.7,422.7"/>
<polyline points="559.4,409.8 592.0,408.8 593.4,412.5 597.1,412.5"/>
<polyline points="698.9,361.5 699.5,372.0 703.5,372.0"/>
</g>
<g fill="none" stroke="#fff" stroke-width="1.6" stroke-linecap="round">
<polyline points="610.5,316.8 603.5,328.5"/>
<polyline points="695,367.5 696.3,380 699.3,389"/>
<polyline points="699.5,363 703.5,368.5"/>
</g>
<polygon points="722.0,278.8 728.5,278.0 732.6,280.0 736.1,292.3 743.1,298.1 739.6,303.4 732.6,309.8 726.7,315.7 723.8,321.6 722.0,320.4 717.3,304.0 717.9,301.6 719.7,287.6" fill="#879ec7" stroke="#fff" stroke-width="0.4" stroke-linejoin="round"/>
<polygon points="714.1,303.6 716.6,302.6 717.3,304.0 722.0,320.4 723.6,322.0 724.4,325.5 722.0,326.3 712.3,328.2 711.7,320.1 712.9,312.1" fill="#c2cfe6" stroke="#fff" stroke-width="0.4" stroke-linejoin="round"/>
<polygon points="701.5,308.6 714.2,305.0 712.9,312.1 711.7,320.1 712.3,328.2 707.6,330.2 705.0,319.2" fill="#d4def0" stroke="#fff" stroke-width="0.4" stroke-linejoin="round"/>
<polygon points="700.9,309.3 691.6,311.0 686.9,315.5 683.9,320.9 685.7,325.0 681.0,330.2 669.3,331.4 666.4,333.8 668.1,337.9 663.4,344.3 663.4,345.7 692.1,339.6 696.3,340.2 699.8,344.9 707.4,347.2 708.0,346.0 707.4,336.1 705.6,324.4 702.7,315.0" fill="#2f5597" stroke="#fff" stroke-width="0.4" stroke-linejoin="round"/>
<polygon points="707.4,350.2 710.3,349.6 719.7,344.3 717.9,343.7 710.3,347.2 708.0,346.5" fill="#2f5597" stroke="#fff" stroke-width="0.4" stroke-linejoin="round"/>
<polygon points="707.7,330.4 722.0,326.3 724.4,325.7 723.8,328.6 726.1,332.5 729.5,333.0 731.5,331.0 732.8,333.0 730.0,335.0 726.7,336.2 724.4,333.8 722.6,333.6 708.0,335.8" fill="#6a86b7" stroke="#fff" stroke-width="0.4" stroke-linejoin="round"/>
<polygon points="708.0,336.3 720.9,334.0 721.7,340.2 710.3,344.3 708.2,345.8" fill="#dae3f3" stroke="#fff" stroke-width="0.4" stroke-linejoin="round"/>
<polygon points="721.1,334.0 723.2,333.5 724.4,334.5 724.1,337.9 722.0,340.5" fill="#dae3f3" stroke="#fff" stroke-width="0.4" stroke-linejoin="round"/>
<polygon points="658.8,346.6 663.4,344.3 663.4,345.7 692.1,339.8 696.8,340.4 699.8,345.5 698.0,349.0 701.5,355.4 698.6,361.3 695.1,362.5 662.3,368.3" fill="#c5d2e8" stroke="#fff" stroke-width="0.4" stroke-linejoin="round"/>
<polygon points="699.8,345.5 706.8,347.8 707.4,354.8 705.0,366.0 699.2,363.0 701.5,355.4 698.0,349.0" fill="#ced9ed" stroke="#fff" stroke-width="0.4" stroke-linejoin="round"/>
</svg>
<span class="t" style="left:532.50px;top:227.59px;font-size:17.5px;line-height:17.5px;color:#595959;transform:scaleX(1.0771);">Chart Title</span>
<span class="t" style="left:758.10px;top:265.31px;font-size:11.8px;line-height:11.8px;color:#595959;transform:scaleX(0.9015);">CUSTOMERS</span>
<div class="b" style="left:763.6px;top:291.7px;width:10.2px;height:95.7px;background:linear-gradient(#2f5597,#dae3f3);"></div>
<span class="t" style="left:779.80px;top:287.11px;font-size:11.8px;line-height:11.8px;color:#595959;transform:scaleX(0.9876);">3000</span>
<span class="t" style="left:779.80px;top:383.41px;font-size:11.8px;line-height:11.8px;color:#595959;transform:scaleX(0.9834);">100</span>
<span class="t" style="left:684.50px;top:505.92px;font-size:8.6px;line-height:8.6px;color:#404040;transform:scaleX(0.9220);">Powered by Bing</span>
<span class="t" style="left:621.50px;top:516.52px;font-size:8.6px;line-height:8.6px;color:#404040;transform:scaleX(0.9483);">© GeoNames, Microsoft, TomTom</span>
<svg width="1024" height="622" viewBox="0 0 1024 622" style="left:0;top:0;"><circle cx="309.7" cy="216.4" r="4.1" fill="#fff" stroke="#555" stroke-width="1.5"/><circle cx="576.2" cy="216.4" r="4.1" fill="#fff" stroke="#555" stroke-width="1.5"/><circle cx="842.7" cy="216.4" r="4.1" fill="#fff" stroke="#555" stroke-width="1.5"/><circle cx="309.7" cy="376.5" r="4.1" fill="#fff" stroke="#555" stroke-width="1.5"/><circle cx="842.7" cy="376.5" r="4.1" fill="#fff" stroke="#555" stroke-width="1.5"/><circle cx="309.7" cy="536.3" r="4.1" fill="#fff" stroke="#555" stroke-width="1.5"/><circle cx="576.2" cy="536.3" r="4.1" fill="#fff" stroke="#555" stroke-width="1.5"/><circle cx="842.7" cy="536.3" r="4.1" fill="#fff" stroke="#555" stroke-width="1.5"/></svg>
<div class="b" style="left:855.1px;top:215.4px;width:30.8px;height:30.2px;background:#fff;border:1px solid #5a5a5a;"></div>
<div class="b" style="left:855.1px;top:257.3px;width:30.8px;height:30.2px;background:#fff;border:1px solid #5a5a5a;"></div>
<svg width="1024" height="622" viewBox="0 0 1024 622" style="left:0;top:0;" fill="none"><path d="M860.6 229.4 H878.6 M869.6 220.4 V238.4" stroke="#2e9e4f" stroke-width="1.4"/><path d="M869.4 272.6 L877.2 265.4 C878.4 264.4 879.6 265.6 878.6 266.8 L871.4 274.6" stroke="#444" stroke-width="1.2" fill="#fff"/><path d="M860.6 278.2 C863.6 277.8 864.6 275.6 865.8 273.8 C867.4 271.6 870.6 272 871.4 274.2 C872 276.6 869.8 279 866.8 279.4 C864.6 279.6 862.2 279.2 860.6 278.2 Z" fill="#8ab4e8" stroke="#2f7ad6" stroke-width="1"/></svg>
<div class="b" style="left:1px;top:571.5px;width:1022px;height:26px;background:#e6e6e6;"></div>
<div class="b" style="left:1px;top:571px;width:1000.5px;height:1px;background:#9e9e9e;"></div>
<div class="b" style="left:1px;top:597px;width:1022px;height:23.5px;background:#f3f2f1;border-top:1px solid #cfcfcf;"></div>
<div class="b" style="left:613px;top:571px;width:79px;height:22.8px;background:#fff;border-left:1px solid #bdbdbd;border-right:1px solid #bdbdbd;"></div>
<div class="b" style="left:613.4px;top:593px;width:78.4px;height:2px;background:#217346;"></div>
<span class="t" style="left:107.00px;top:573.73px;font-size:14.5px;line-height:14.5px;color:#444;transform:scaleX(1.0085);">EditText</span>
<span class="t" style="left:191.30px;top:573.73px;font-size:14.5px;line-height:14.5px;color:#444;transform:scaleX(1.0700);">Population of states, territori</span>
<span class="t" style="left:414.10px;top:573.73px;font-size:14.5px;line-height:14.5px;color:#444;transform:scaleX(0.9948);">Sheet6</span>
<span class="t" style="left:484.40px;top:573.73px;font-size:14.5px;line-height:14.5px;color:#444;transform:scaleX(0.9948);">Sheet8</span>
<span class="t" style="left:554.70px;top:573.73px;font-size:14.5px;line-height:14.5px;color:#444;transform:scaleX(0.9948);">Sheet9</span>
<span class="t" style="left:624.00px;top:573.73px;font-size:14.5px;line-height:14.5px;color:#217346;font-weight:bold;transform:scaleX(1.0175);">Sheet10</span>
<div class="b" style="left:92.0px;top:575.5px;width:1px;height:17.5px;background:#a6a6a6;"></div>
<div class="b" style="left:173.2px;top:575.5px;width:1px;height:17.5px;background:#a6a6a6;"></div>
<div class="b" style="left:402.0px;top:575.5px;width:1px;height:17.5px;background:#a6a6a6;"></div>
<div class="b" style="left:472.3px;top:575.5px;width:1px;height:17.5px;background:#a6a6a6;"></div>
<div class="b" style="left:542.6px;top:575.5px;width:1px;height:17.5px;background:#a6a6a6;"></div>
<span class="t" style="left:14.50px;top:603.89px;font-size:12.3px;line-height:12.3px;color:#555;transform:scaleX(0.8974);">Ready</span>
<span class="t" style="left:578.30px;top:603.89px;font-size:12.3px;line-height:12.3px;color:#444;transform:scaleX(0.9122);">Display Settings</span>
<span class="t" style="left:974.10px;top:603.89px;font-size:12.3px;line-height:12.3px;color:#555;transform:scaleX(0.8559);">100%</span>
<div class="b" style="left:680.9px;top:597.8px;width:43.6px;height:22.7px;background:#d1cfcd;"></div>
<div class="b" style="left:1003.5px;top:182.3px;width:16.8px;height:16px;background:#fff;border:1px solid #c6c6c6;"></div>
<div class="b" style="left:1003.5px;top:199.5px;width:16.8px;height:307px;background:#fff;border:1px solid #c6c6c6;"></div>
<div class="b" style="left:1003.5px;top:555.3px;width:16.8px;height:16px;background:#fff;border:1px solid #c6c6c6;"></div>
<div class="b" style="left:870.4px;top:576.5px;width:15.8px;height:16px;background:#fff;border:1px solid #c6c6c6;"></div>
<div class="b" style="left:886.2px;top:576.5px;width:89.7px;height:16px;background:#fff;border:1px solid #c6c6c6;border-left:none;"></div>
<div class="b" style="left:984.7px;top:576.5px;width:16.1px;height:16px;background:#fff;border:1px solid #c6c6c6;"></div>
<svg width="1024" height="622" viewBox="0 0 1024 622" style="left:0;top:0;" fill="none"><path d="M30 579.8 V588.6 L25.7 584.2 Z" fill="#217346"/><path d="M51.3 580.4 V588 L55.3 584.2 Z" fill="#bdbdbd"/><rect x="73.8" y="585" width="1.7" height="1.7" fill="#217346"/><rect x="78.3" y="585" width="1.7" height="1.7" fill="#217346"/><rect x="82.8" y="585" width="1.7" height="1.7" fill="#217346"/><circle cx="730" cy="584.2" r="8.2" stroke="#7a7a7a" stroke-width="1.1"/><path d="M725.6 584.2 H734.4 M730 579.8 V588.6" stroke="#6a6a6a" stroke-width="1.3"/><rect x="854.8" y="579.4000000000001" width="1.7" height="1.7" fill="#a0a0a0"/><rect x="854.8" y="583.4000000000001" width="1.7" height="1.7" fill="#a0a0a0"/><rect x="854.8" y="587.4000000000001" width="1.7" height="1.7" fill="#a0a0a0"/><path d="M1008 191.8 H1016.2 L1012.1 187.9 Z" fill="#111"/><path d="M1008 561.6 H1016.2 L1012.1 565.6 Z" fill="#111"/><path d="M880.6 580.2 V588.8 L876.4 584.5 Z" fill="#111"/><path d="M990.6 580.2 V588.8 L994.8 584.5 Z" fill="#111"/><path d="M68.5 607 V603.6 H83.2 V609 M68.5 604.9 H83.2 M68.5 607 V616.6 H74.6" stroke="#444" stroke-width="1.1"/><path d="M70.4 608.6 H74 M70.4 611 H73 M70.4 613.6 H73" stroke="#444" stroke-width="1"/><circle cx="79.4" cy="612.3" r="4.3" stroke="#444" stroke-width="1.1" fill="#f3f2f1"/><circle cx="79.4" cy="612.3" r="2" fill="#444"/><path d="M566.5 612.4 H559.5 V603.6 H574.3 V608" stroke="#444" stroke-width="1.1"/><circle cx="570.6" cy="612" r="2.6" stroke="#444" stroke-width="1.2"/><path d="M570.6 607.6 V609.2 M570.6 614.8 V616.4 M566.2 612 H567.8 M573.4 612 H575 M567.5 608.9 L568.6 610 M572.6 614 L573.7 615.1 M567.5 615.1 L568.6 614 M572.6 610 L573.7 608.9" stroke="#444" stroke-width="1.2"/><path d="M695.4 602.7 H709.2 V615.4 H695.4 Z M700 602.7 V615.4 M704.6 602.7 V615.4 M695.4 606.9 H709.2 M695.4 611.2 H709.2" stroke="#333" stroke-width="1.4"/><path d="M740.1 602.7 H754.2 V615.4 H740.1 Z M743.4 605.4 H750.9 V612.8 H743.4 Z M745 607.6 H749.4 M745 609.2 H749.4 M745 610.8 H749.4" stroke="#444" stroke-width="1.3"/><path d="M784.1 602.7 H798.9 V615.4 H784.1 Z M788.6 602.7 V609.6 H795 V602.7" stroke="#444" stroke-width="1.3"/><path d="M819.8 609.6 H828.2 M950.6 609.6 H958.8 M954.7 605.5 V613.7" stroke="#555" stroke-width="1.1"/><path d="M834.5 609.6 H944.2" stroke="#8a8a8a" stroke-width="1"/><rect x="887.3" y="602.9" width="5.3" height="12.3" fill="#444"/></svg>
</body></html>
